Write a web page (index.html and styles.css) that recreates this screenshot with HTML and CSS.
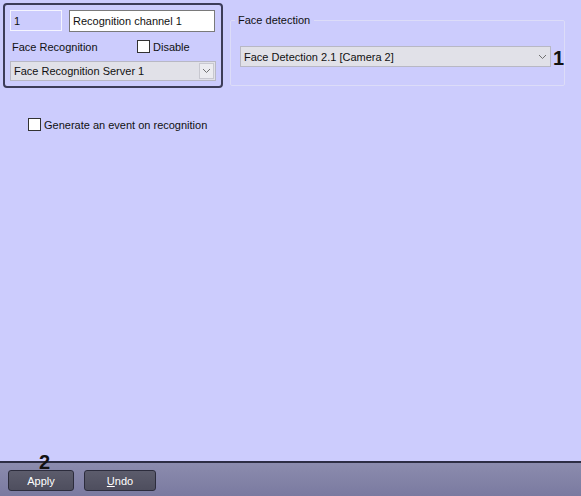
FILE: index.html
```html
<!DOCTYPE html>
<html>
<head>
<meta charset="utf-8">
<link rel="stylesheet" href="styles.css">
</head>
<body>
<div class="page">
  <div class="top">
    <div class="panel">
      <div class="row1">
        <div class="tb tb-id">1</div>
        <div class="tb tb-name">Recognition channel 1</div>
      </div>
      <div class="row2">
        <span class="lbl">Face Recognition</span>
        <label class="chk"><span class="box"></span>Disable</label>
      </div>
      <div class="combo combo-server">
        <span class="ctext">Face Recognition Server 1</span>
        <span class="cbtn"><svg width="9" height="6" viewBox="0 0 9 6"><path d="M1 1 L4.5 4.5 L8 1" fill="none" stroke="#707070" stroke-width="1"/></svg></span>
      </div>
    </div>
    <div class="group">
      <div class="legend">Face detection</div>
      <div class="grow">
        <div class="combo combo-det">
          <span class="ctext">Face Detection 2.1 [Camera 2]</span>
          <span class="arrow"><svg width="9" height="6" viewBox="0 0 9 6"><path d="M1 1 L4.5 4.5 L8 1" fill="none" stroke="#707070" stroke-width="1"/></svg></span>
        </div>
        <span class="num num1">1</span>
      </div>
    </div>
  </div>
  <label class="chk gen"><span class="box"></span>Generate an event on recognition</label>
  <div class="spacer"></div>
  <div class="bar">
    <span class="num num2">2</span>
    <button class="btn btn-apply">Apply</button>
    <button class="btn btn-undo"><u>U</u>ndo</button>
  </div>
</div>
</body>
</html>
```
FILE: styles.css
```css
html, body {
  margin: 0;
  padding: 0;
}
body {
  background: #ccccfd;
  font-family: "Liberation Sans", Arial, sans-serif;
  font-size: 11px;
  color: #111;
}
.page {
  height: 496px;
  display: flex;
  flex-direction: column;
}
.top {
  display: flex;
  align-items: flex-start;
}
.panel {
  margin: 3px 0 0 3px;
  width: 206px;
  height: 71px;
  border: 2px solid #3c3c58;
  border-radius: 4px;
  padding: 5px;
  display: flex;
  flex-direction: column;
}
.row1 {
  display: flex;
  gap: 7px;
}
.tb {
  box-sizing: border-box;
  height: 22px;
  padding: 4px 3px 0;
  white-space: nowrap;
  flex-shrink: 0;
}
.tb-id {
  width: 52px;
  height: 21px;
  background: #ccccfd;
  border: 1px solid #f4f4ff;
}
.tb-name {
  width: 146px;
  background: #fff;
  border: 1px solid #7a7a7a;
}
.row2 {
  display: flex;
  align-items: center;
  height: 25px;
  margin-top: 2px;
  padding-left: 2px;
}
.lbl {
  width: 125px;
}
.chk {
  display: flex;
  align-items: center;
}
.box {
  width: 11px;
  height: 11px;
  border: 1px solid #333;
  background: #fff;
  margin-right: 3px;
  display: inline-block;
}
.combo {
  box-sizing: border-box;
  display: flex;
  align-items: center;
  background: #e1e1e8;
  border: 1px solid #b8b8c4;
}
.combo-server {
  width: 206px;
  height: 20px;
  margin-top: 2px;
  padding-left: 3px;
}
.ctext {
  flex: 1;
  white-space: nowrap;
}
.cbtn {
  width: 15px;
  height: 16px;
  margin-right: 1px;
  border: 1px solid #c8c8d0;
  background: #ececf0;
  display: flex;
  align-items: center;
  justify-content: center;
  box-sizing: border-box;
}
.arrow {
  width: 14px;
  display: flex;
  align-items: center;
  justify-content: center;
}
.group {
  margin: 20px 0 0 7px;
  width: 333px;
  height: 64px;
  border: 1px solid #dcdcf8;
  border-radius: 2px;
  position: relative;
}
.legend {
  position: absolute;
  top: -7px;
  left: 4px;
  background: #ccccfd;
  padding: 0 4px 0 3px;
  line-height: 13px;
}
.grow {
  display: flex;
  align-items: flex-start;
  margin: 25px 0 0 9px;
}
.combo-det {
  width: 313px;
  height: 21px;
  padding-left: 3px;
}
.num {
  font-weight: bold;
  font-size: 20px;
  color: #111;
  font-family: "Liberation Sans", Arial, sans-serif;
}
.num1 {
  margin-left: 2px;
  line-height: 20px;
  margin-top: 2px;
}
.gen {
  margin: 30px 0 0 28px;
  align-self: flex-start;
}
.spacer {
  flex: 1;
}
.bar {
  height: 35px;
  border-top: 2px solid #2e2e44;
  background: linear-gradient(#8c8cae, #7a7aa0);
  display: flex;
  align-items: flex-start;
  padding: 7px 0 0 8px;
  gap: 10px;
  position: relative;
  box-sizing: border-box;
}
.num2 {
  position: absolute;
  left: 39px;
  top: -11px;
  line-height: 20px;
}
.btn {
  height: 21px;
  border: 1px solid #2c2c3c;
  border-radius: 3px;
  background: linear-gradient(#5c5c6c, #4e4e5e);
  color: #fff;
  font-family: "Liberation Sans", Arial, sans-serif;
  font-size: 11px;
  padding: 0;
}
.btn-apply {
  width: 66px;
}
.btn-undo {
  width: 72px;
}
```
